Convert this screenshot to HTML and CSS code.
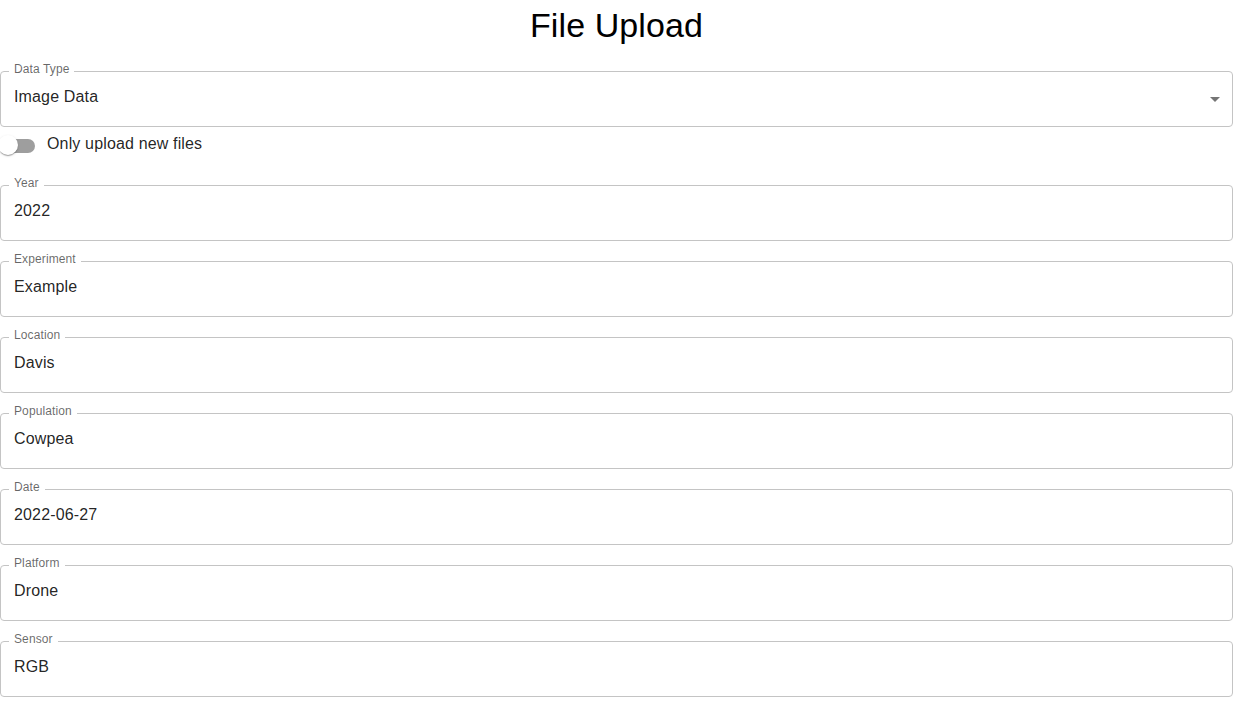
FILE: index.html
```html
<!DOCTYPE html>
<html lang="en">
<head>
<meta charset="utf-8">
<title>File Upload</title>
<link rel="stylesheet" href="styles.css">
</head>
<body>
<main class="page">
  <h1 class="title">File Upload</h1>
  <form class="form">
    <div class="field field-select">
      <span class="field-label">Data Type</span>
      <div class="field-value">Image Data</div>
      <svg class="select-icon" viewBox="0 0 24 24" width="24" height="24" aria-hidden="true"><path d="M7 10l5 5 5-5z"/></svg>
    </div>
    <label class="switch-row">
      <span class="switch">
        <span class="switch-track"></span>
        <span class="switch-thumb"></span>
      </span>
      <span class="switch-label">Only upload new files</span>
    </label>
    <div class="field spaced">
      <span class="field-label">Year</span>
      <div class="field-value">2022</div>
    </div>
    <div class="field spaced">
      <span class="field-label">Experiment</span>
      <div class="field-value">Example</div>
    </div>
    <div class="field spaced">
      <span class="field-label">Location</span>
      <div class="field-value">Davis</div>
    </div>
    <div class="field spaced">
      <span class="field-label">Population</span>
      <div class="field-value">Cowpea</div>
    </div>
    <div class="field spaced">
      <span class="field-label">Date</span>
      <div class="field-value">2022-06-27</div>
    </div>
    <div class="field spaced">
      <span class="field-label">Platform</span>
      <div class="field-value">Drone</div>
    </div>
    <div class="field spaced">
      <span class="field-label">Sensor</span>
      <div class="field-value">RGB</div>
    </div>
  </form>
</main>
</body>
</html>
```
FILE: styles.css
```css
html, body {
  margin: 0;
  padding: 0;
  background: #fff;
}

body {
  font-family: "Liberation Sans", Arial, sans-serif;
  color: rgba(0, 0, 0, 0.87);
  overflow: hidden;
}

.page {
  display: flex;
  flex-direction: column;
}

.title {
  margin: 0 0 21px;
  font-size: 34px;
  font-weight: 400;
  line-height: 50px;
  letter-spacing: 0.1px;
  text-align: center;
  color: #000;
}

.form {
  display: flex;
  flex-direction: column;
}

.field {
  position: relative;
  box-sizing: border-box;
  height: 56px;
  border: 1px solid #c4c4c4;
  border-radius: 4px;
}

.field.spaced {
  margin-top: 20px;
}

.field-label {
  position: absolute;
  top: -10px;
  left: 8px;
  padding: 0 5px;
  background: #fff;
  font-size: 12px;
  line-height: 14px;
  letter-spacing: 0.11px;
  color: rgba(0, 0, 0, 0.6);
}

.field-value {
  padding: 15px 13px 0;
  font-size: 16px;
  line-height: 20px;
  letter-spacing: 0.15px;
  color: rgba(0, 0, 0, 0.87);
}

.select-icon {
  position: absolute;
  right: 5px;
  top: 15px;
  fill: rgba(0, 0, 0, 0.54);
}

.switch-row {
  display: flex;
  align-items: center;
  height: 38px;
  margin-left: -11px;
}

.switch {
  position: relative;
  width: 58px;
  height: 38px;
  flex: none;
}

.switch-track {
  position: absolute;
  left: 12px;
  top: 12px;
  width: 34px;
  height: 14px;
  border-radius: 7px;
  background: #000;
  opacity: 0.38;
}

.switch-thumb {
  position: absolute;
  left: 9px;
  top: 8px;
  width: 20px;
  height: 20px;
  border-radius: 50%;
  background: #fff;
  box-shadow: 0 2px 1px -1px rgba(0, 0, 0, 0.2), 0 1px 1px 0 rgba(0, 0, 0, 0.14), 0 1px 3px 0 rgba(0, 0, 0, 0.12);
}

.switch-label {
  margin-bottom: 5px;
  font-size: 16px;
  line-height: 24px;
  letter-spacing: 0.15px;
  color: rgba(0, 0, 0, 0.87);
}
```
